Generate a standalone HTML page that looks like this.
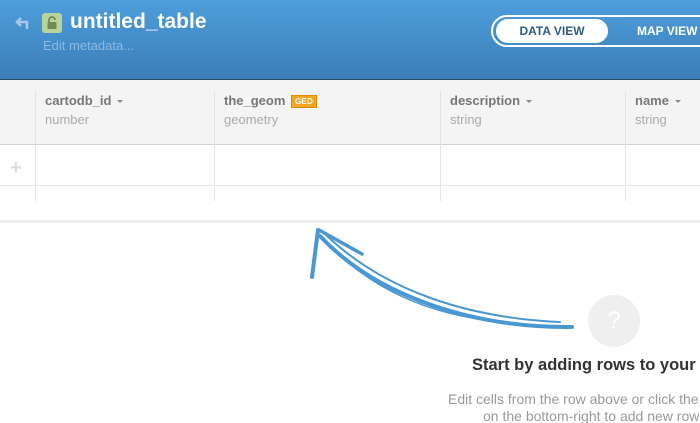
<!DOCTYPE html>
<html><head><meta charset="utf-8"><style>
*{margin:0;padding:0;box-sizing:border-box}
html,body{width:700px;height:423px;overflow:hidden}
body{background:#fff;font-family:"Liberation Sans",Arial,sans-serif}
#w{position:relative;width:700px;height:423px;overflow:hidden}
.hdr{position:absolute;left:0;top:0;width:700px;height:80px;background:linear-gradient(#4d9edb,#3c7db8);border-bottom:1px solid #2b4a66}
.t{position:absolute;color:#fff;font-weight:bold}
.th{position:absolute;left:0;top:80px;width:700px;height:65px;background:#f4f4f4;border-bottom:1px solid #d4d4d4}
.vl{position:absolute;width:1px;background:#e4e4e4}
.cn{position:absolute;top:93px;font-size:13px;font-weight:bold;color:#777;white-space:nowrap}
.ct{position:absolute;top:112px;font-size:13px;color:#aaa}
.car{display:inline-block;width:0;height:0;border-left:3px solid transparent;border-right:3px solid transparent;border-top:3px solid #888;vertical-align:middle;margin-left:6px}
</style></head><body><div id="w">
<div class="hdr"></div>
<svg style="position:absolute;left:15px;top:16px" width="18" height="14" viewBox="0 0 18 14"><path d="M6 2 L2 6 L6 10 M2 6 H12 V13" fill="none" stroke="#a9c8e6" stroke-width="2.6"/></svg>
<div style="position:absolute;left:42px;top:13px;width:20px;height:20px;border-radius:3px;background:#b9d49a"></div>
<svg style="position:absolute;left:46px;top:16px" width="12" height="14" viewBox="0 0 12 14"><path d="M3 6 V4 a3 3 0 0 1 6 0" fill="none" stroke="#6f8a55" stroke-width="1.8"/><rect x="1.5" y="6" width="9" height="7" rx="1" fill="#6f8a55"/></svg>
<div class="t" style="left:70px;top:10px;font-size:21px">untitled_table</div>
<div style="position:absolute;left:43px;top:38px;font-size:13px;color:#8ebae3">Edit metadata...</div>
<div style="position:absolute;left:491px;top:15px;width:240px;height:32px;border:2px solid #fff;border-radius:16px"></div>
<div style="position:absolute;left:496px;top:19px;width:112px;height:24px;background:#fff;border-radius:12px;color:#2e5c8a;font-size:12px;font-weight:bold;text-align:center;line-height:24px">DATA VIEW</div>
<div class="t" style="left:637px;top:24px;font-size:12px">MAP VIEW</div>
<div class="th"></div>
<div class="vl" style="left:35px;top:91px;height:110px"></div>
<div class="vl" style="left:214px;top:91px;height:110px"></div>
<div class="vl" style="left:440px;top:91px;height:110px"></div>
<div class="vl" style="left:625px;top:91px;height:110px"></div>
<div style="position:absolute;left:0;top:185px;width:700px;height:1px;background:#e8e8e8"></div>
<div class="cn" style="left:45px">cartodb_id<span class="car"></span></div><div class="ct" style="left:45px">number</div>
<div class="cn" style="left:224px">the_geom <span style="display:inline-block;background:#f5a623;border:1px solid #e08a00;color:#fff;font-size:8px;padding:1px 3px;vertical-align:1px;margin-left:2px">GEO</span></div><div class="ct" style="left:224px">geometry</div>
<div class="cn" style="left:450px">description<span class="car"></span></div><div class="ct" style="left:450px">string</div>
<div class="cn" style="left:635px">name<span class="car"></span></div><div class="ct" style="left:635px">string</div>
<div style="position:absolute;left:10px;top:157px;color:#ddd;font-size:20px;font-weight:bold">+</div>
<div style="position:absolute;left:0;top:220px;width:700px;height:3px;background:#ececec"></div>
<svg style="position:absolute;left:0;top:0" width="700" height="423">
<g fill="none" stroke="#4b97d2" stroke-linecap="round">
<path d="M572 327 C480 328 380 300 320 236" stroke-width="4"/>
<path d="M560 322 C470 318 385 292 325 234" stroke-width="2"/>
<path d="M500 322 C430 315 370 290 322 238" stroke-width="1.5"/>
<path d="M318 230 L312 277" stroke-width="4"/>
<path d="M319 230 L362 254" stroke-width="3.5"/>
</g>
</svg>
<div style="position:absolute;left:588px;top:295px;width:52px;height:52px;border-radius:50%;background:#efefef;color:#fff;font-size:24px;text-align:center;line-height:52px">?</div>
<div style="position:absolute;left:472px;top:356px;font-size:16.5px;font-weight:bold;color:#333;white-space:nowrap">Start by adding rows to your table</div>
<div style="position:absolute;left:448px;top:391px;font-size:14px;color:#999;white-space:nowrap">Edit cells from the row above or click the button</div>
<div style="position:absolute;left:483px;top:408px;font-size:14px;color:#999;white-space:nowrap">on the bottom-right to add new rows</div>
</div></body></html>
